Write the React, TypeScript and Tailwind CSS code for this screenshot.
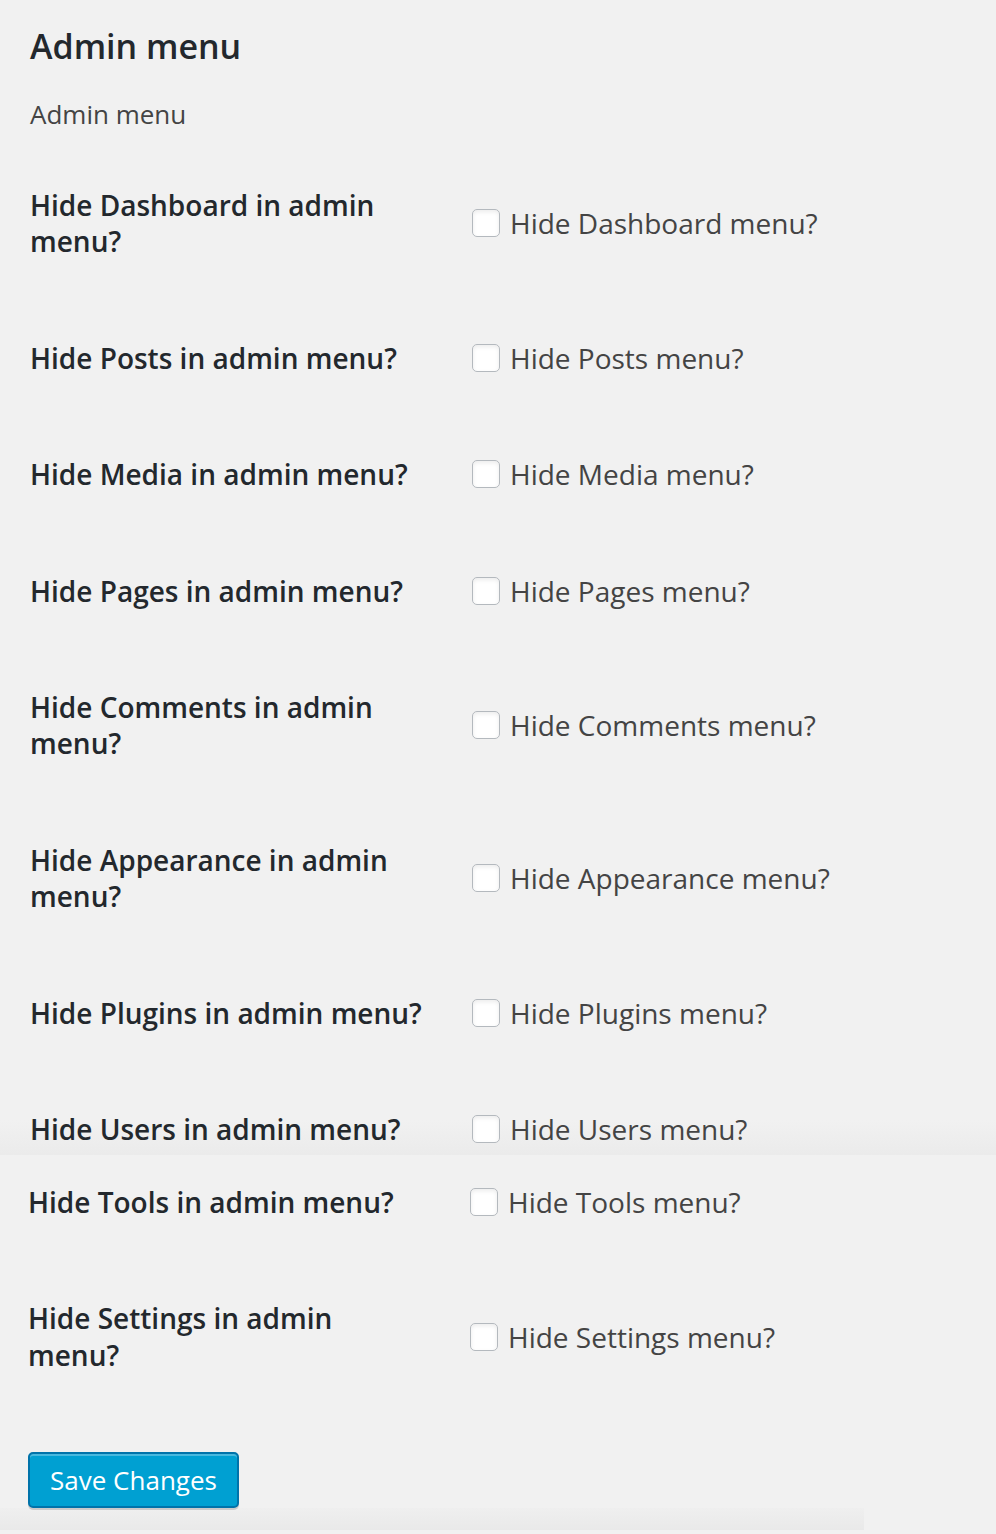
import React from "react";

const topRows: { label: string; check: string }[] = [
  { label: "Hide Dashboard in admin menu?", check: "Hide Dashboard menu?" },
  { label: "Hide Posts in admin menu?", check: "Hide Posts menu?" },
  { label: "Hide Media in admin menu?", check: "Hide Media menu?" },
  { label: "Hide Pages in admin menu?", check: "Hide Pages menu?" },
  { label: "Hide Comments in admin menu?", check: "Hide Comments menu?" },
  { label: "Hide Appearance in admin menu?", check: "Hide Appearance menu?" },
  { label: "Hide Plugins in admin menu?", check: "Hide Plugins menu?" },
  { label: "Hide Users in admin menu?", check: "Hide Users menu?" },
];

function Row({ label, check, className = "py-[40px]" }: { label: string; check: string; className?: string }) {
  return (
    <div className={`flex items-center ${className}`}>
      <div className="w-[442px] shrink-0 pr-[41px] text-[28px] leading-[36.4px] font-semibold text-[#23282d]">
        {label}
      </div>
      <label className="flex items-center gap-[10px] text-[28px] leading-[36.4px] text-[#444]">
        <input
          type="checkbox"
          className="appearance-none w-[28px] h-[28px] m-0 rounded-[5px] border border-[#b4b9be] bg-white shadow-[inset_0_2px_4px_rgba(0,0,0,0.08)]"
        />
        <span>{check}</span>
      </label>
    </div>
  );
}

export default function App() {
  return (
    <div
      className="w-full min-h-[1534px] bg-[#f1f1f1]"
      style={{ fontFamily: '"Open Sans", "Noto Sans", sans-serif' }}
    >
      <div className="h-[1155px] overflow-hidden pl-[30px] bg-[linear-gradient(to_bottom,#f1f1f1_0,#f1f1f1_1120px,#ebebeb_1155px)]">
        <h2 className="pt-[24px] text-[34px] leading-[44px] font-semibold text-[#23282d]">Admin menu</h2>
        <p className="mt-[28px] text-[26px] leading-[36px] text-[#444]">Admin menu</p>
        <div className="mt-[15px]">
          {topRows.map((r) => (
            <Row key={r.label} label={r.label} check={r.check} />
          ))}
        </div>
      </div>
      <div className="pl-[28px]">
        <Row label="Hide Tools in admin menu?" check="Hide Tools menu?" className="pt-[29px] pb-[40px]" />
        <Row label="Hide Settings in admin menu?" check="Hide Settings menu?" />
        <div className="pt-[39px]">
          <button className="w-[211px] h-[56px] rounded-[5px] border-2 border-[#0073aa] bg-[#00a0d2] text-white text-[26px] leading-[52px] shadow-[inset_0_2px_0_rgba(120,200,230,0.6),0_2px_0_rgba(0,0,0,0.15)]">
            Save Changes
          </button>
        </div>
      </div>
      <div className="w-[864px] h-[22px] bg-[linear-gradient(to_bottom,#efefef,#e9e9e9)]" />
    </div>
  );
}
